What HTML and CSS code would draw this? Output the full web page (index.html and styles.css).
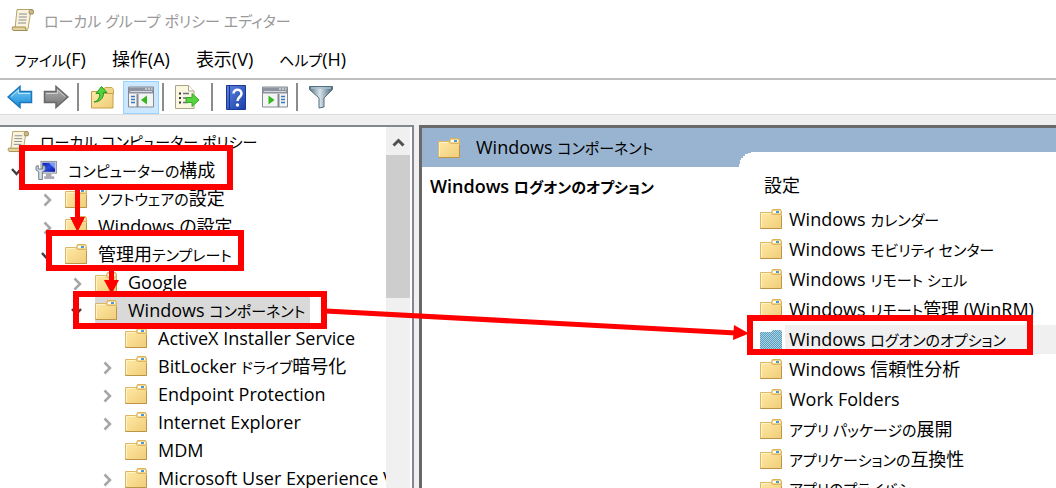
FILE: index.html
```html
<!DOCTYPE html>
<html lang="ja">
<head>
    <meta charset="UTF-8">
    <meta name="viewport" content="width=device-width, initial-scale=1.0">
    <title>ローカル グループ ポリシー エディター</title>
    <link rel="stylesheet" href="styles.css">
</head>
<body>
    <svg class="defs" aria-hidden="true">
        <defs>
            <linearGradient id="gFolder" x1="0" y1="0" x2="1" y2="1">
                <stop offset="0" stop-color="#ffe9a6"/>
                <stop offset="1" stop-color="#f0cd78"/>
            </linearGradient>
            <linearGradient id="gBlue" x1="0" y1="0" x2="0" y2="1">
                <stop offset="0" stop-color="#7fd0f7"/>
                <stop offset="1" stop-color="#1488d8"/>
            </linearGradient>
            <linearGradient id="gGray" x1="0" y1="0" x2="0" y2="1">
                <stop offset="0" stop-color="#b4b4b4"/>
                <stop offset="1" stop-color="#727272"/>
            </linearGradient>
            <linearGradient id="gHelp" x1="0" y1="0" x2="1" y2="1">
                <stop offset="0" stop-color="#5e86e0"/>
                <stop offset="1" stop-color="#1a3ea8"/>
            </linearGradient>
            <linearGradient id="gFunnel" x1="0" y1="0" x2="1" y2="0">
                <stop offset="0" stop-color="#5c7482"/>
                <stop offset="0.45" stop-color="#d5e3ec"/>
                <stop offset="1" stop-color="#4b6373"/>
            </linearGradient>
            <linearGradient id="gScreen" x1="0" y1="0" x2="1" y2="1">
                <stop offset="0" stop-color="#0a1fb0"/>
                <stop offset="0.5" stop-color="#2a4be0"/>
                <stop offset="1" stop-color="#0614a0"/>
            </linearGradient>
            <pattern id="pCheck" width="2" height="2" patternUnits="userSpaceOnUse">
                <rect width="2" height="2" fill="#b9cfc4"/>
                <rect width="1" height="1" fill="#4ba0de"/>
                <rect x="1" y="1" width="1" height="1" fill="#4ba0de"/>
            </pattern>
        </defs>
        <symbol id="folder" viewBox="0 0 22 20">
            <path d="M11 4.500L12.500.5h8l1 2V8H11z" fill="#f3d588" stroke="#d9b25c"/>
            <rect x="13" y="2" width="7" height="2" fill="#fff"/>
            <rect x="16" y="2" width="3" height="2" fill="#4a9ad8"/>
            <path d="M.5 3.500h10l2 2h9v14H.5z" fill="url(#gFolder)" stroke="#dcb866"/>
            <path d="M.5 19.500h21V7" fill="none" stroke="#bd9548"/>
            <path d="M1.500 18V4.500h8.500" fill="none" stroke="#fff3c8"/>
        </symbol>
        <symbol id="folderSel" viewBox="0 0 22 20">
            <path d="M0 3h11l2-2h8l1 2v17H0z" fill="url(#pCheck)"/>
        </symbol>
        <symbol id="scroll" viewBox="0 0 23 24">
            <path d="M6 1.500h14.500c1.500 0 2 1.500 1.500 3l-2.500.5L17 21H4z" fill="#fbf4dc" stroke="#b5a36e"/>
            <path d="M19.500 1.500c-2 1-1.500 3-1 4.500h3.500c1-2 .5-4-1-4.500z" fill="#cdb98a" stroke="#9b895c"/>
            <path d="M1.500 19h13c-.5 2 .5 3.500 2 3.500H3c-2 0-2-2-1.500-3.500z" fill="#e6d39c" stroke="#a18d55"/>
            <path d="M8 6h8M7.800 9h8M7.500 12h8M7 15h8" stroke="#8b8b96" fill="none"/>
        </symbol>
        <symbol id="computer" viewBox="0 0 24 22">
            <rect x="6.500" y="1.500" width="17" height="13" fill="#d8dade" stroke="#8a8d94"/>
            <rect x="8" y="3" width="14" height="10" fill="url(#gScreen)"/>
            <path d="M15 3h7v7z" fill="#7f9cf5"/>
            <path d="M12 15h6v3h3v3H10v-3h2z" fill="#a9adb3"/>
            <path d="M1 7v4l3 2v8.500h4V13l3-2V7L8.500 6v4h-5V6z" fill="#d6dfe6" stroke="#66737e"/>
        </symbol>
        <symbol id="open" viewBox="0 0 11 8"><path d="M1 1l4.500 5L10 1" fill="none" stroke="#404040" stroke-width="2.500"/></symbol>
        <symbol id="closed" viewBox="0 0 9 14"><path d="M1.500 1.500L7 7l-5.500 5.500" fill="none" stroke="#a6a6a6" stroke-width="2.500"/></symbol>
    </svg>

    <header class="title-bar">
        <svg class="title-icon"><use href="#scroll"/></svg>
        <h1><span class="kana">ローカル グループ ポリシー エディター</span></h1>
    </header>

    <nav class="menu-bar">
        <button><span class="kana">ファイル</span>(F)</button>
        <button>操作(A)</button>
        <button>表示(V)</button>
        <button><span class="kana">ヘルプ</span>(H)</button>
    </nav>

    <div class="toolbar">
        <button class="tool" aria-label="戻る">
            <svg width="26" height="24" viewBox="0 0 26 24"><path d="M1 12L13 1.500v5h11.500v11H13v5z" fill="url(#gBlue)" stroke="#1b77bd" stroke-width="1.500"/><path d="M4 11.500l7.500-6.500v3.500H23" fill="none" stroke="#b9e6fb"/></svg>
        </button>
        <button class="tool" aria-label="進む">
            <svg width="26" height="24" viewBox="0 0 26 24"><path d="M25 12L13 1.500v5H1.500v11H13v5z" fill="url(#gGray)" stroke="#686868" stroke-width="1.500"/><path d="M3 8.500h11.500V5l7.500 6.500" fill="none" stroke="#cfcfcf"/></svg>
        </button>
        <span class="sep"></span>
        <button class="tool wide" aria-label="1 つ上のレベルへ">
            <svg width="24" height="24" viewBox="0 0 24 24"><path d="M13 5.500L15 2.500h7l1.500 2V9H13z" fill="#f3d588" stroke="#cfa750"/><path d="M1.500 6.500H12l2 2h9v14.500H1.500z" fill="url(#gFolder)" stroke="#c79f4b"/><path d="M4 17c4-1 6-4 5.500-8.500H6L11.500 1.500 17 7.500h-3.500C14 13 10 17 4 17z" fill="#4fd23c" stroke="#279a22"/></svg>
        </button>
        <button class="tool active" aria-label="コンソール ツリーの表示/非表示">
            <svg width="26" height="22" viewBox="0 0 26 22"><path d="M.5 1h25v20H.5z" fill="#f4f4f4" stroke="#848a93"/><path d="M1 1.500h24v6H1z" fill="#8d949f"/><path d="M2 5.500h22" stroke="#d5d9df"/><path d="M17 3h2M20 3h2M23 3h1.500" stroke="#fff"/><path d="M3 10.500h4M3 13.500h4M3 16.500h4" stroke="#3a78c2" stroke-width="1.500"/><path d="M9.500 8v13" stroke="#848a93" stroke-width="2"/><path d="M19 9.500v9L13 14z" fill="#35b81e"/></svg>
        </button>
        <span class="sep"></span>
        <button class="tool wide" aria-label="一覧のエクスポート">
            <svg width="26" height="26" viewBox="0 0 26 26"><path d="M1.500 1.500h13L20 7v17.500H1.500z" fill="#fbf6e0" stroke="#a9a488"/><path d="M14.500 1.500V7H20" fill="#fff" stroke="#a9a488"/><path d="M5 9.500h2M5 14h2M5 18.500h2" stroke="#333" stroke-width="2"/><path d="M9 9.500h6M9 14h4M9 18.500h5" stroke="#6d6d88" stroke-width="1.500"/><path d="M12 13.500h6V9.500l7 6.500-7 6.500V18.500h-6z" fill="#57d33f" stroke="#38a82a"/></svg>
        </button>
        <span class="sep"></span>
        <button class="tool wide" aria-label="ヘルプ">
            <svg width="20" height="25" viewBox="0 0 20 25"><path d="M.5.500h19v24H.5z" fill="url(#gHelp)" stroke="#1b3a94"/><path d="M3.500 1v23" stroke="#16348f"/><path d="M7.500 8.500c0-5 8-5 8 0 0 3.500-4 3.500-4 7.500" fill="none" stroke="#fff" stroke-width="2.500"/><circle cx="11.500" cy="20" r="1.700" fill="#fff"/></svg>
        </button>
        <button class="tool" aria-label="操作ウィンドウの表示/非表示">
            <svg width="26" height="22" viewBox="0 0 26 22"><path d="M.5 1h25v20H.5z" fill="#f4f4f4" stroke="#848a93"/><path d="M1 1.500h24v6H1z" fill="#8d949f"/><path d="M2 5.500h22" stroke="#d5d9df"/><path d="M17 3h2M20 3h2M23 3h1.500" stroke="#fff"/><path d="M19 10.500h4M19 13.500h4M19 16.500h4" stroke="#3a78c2" stroke-width="1.500"/><path d="M16.500 8v13" stroke="#848a93" stroke-width="2"/><path d="M6.500 9.500v9l6-4.500z" fill="#35b81e"/></svg>
        </button>
        <span class="sep"></span>
        <button class="tool wide" aria-label="フィルター">
            <svg width="26" height="24" viewBox="0 0 26 24"><path d="M1.500 1.500h23v3L16 13v9l-5 1V13L1.500 4.500z" fill="url(#gFunnel)" stroke="#566f7e"/><path d="M3 3h20" stroke="#a9c2d0" stroke-width="1.500"/></svg>
        </button>
    </div>

    <main class="panes">
        <section class="tree-pane">
            <ul class="tree">
                <li>
                    <div class="row root"><svg class="icon"><use href="#scroll"/></svg><span class="label kana">ローカル コンピューター ポリシー</span></div>
                    <ul class="first">
                        <li>
                            <div class="row"><svg class="arrow open"><use href="#open"/></svg><svg class="icon"><use href="#computer"/></svg><span class="label"><span class="kana">コンピューターの</span>構成</span></div>
                            <ul>
                                <li><div class="row"><svg class="arrow"><use href="#closed"/></svg><svg class="icon"><use href="#folder"/></svg><span class="label"><span class="kana">ソフトウェアの</span>設定</span></div></li>
                                <li><div class="row"><svg class="arrow"><use href="#closed"/></svg><svg class="icon"><use href="#folder"/></svg><span class="label">Windows の設定</span></div></li>
                                <li>
                                    <div class="row"><svg class="arrow open"><use href="#open"/></svg><svg class="icon"><use href="#folder"/></svg><span class="label">管理用<span class="kana">テンプレート</span></span></div>
                                    <ul>
                                        <li><div class="row"><svg class="arrow"><use href="#closed"/></svg><svg class="icon"><use href="#folder"/></svg><span class="label">Google</span></div></li>
                                        <li>
                                            <div class="row"><svg class="arrow open"><use href="#open"/></svg><div class="selected"><svg class="icon"><use href="#folder"/></svg><span class="label">Windows <span class="kana">コンポーネント</span></span></div></div>
                                            <ul>
                                                <li><div class="row"><span class="arrow"></span><svg class="icon"><use href="#folder"/></svg><span class="label">ActiveX Installer Service</span></div></li>
                                                <li><div class="row"><svg class="arrow"><use href="#closed"/></svg><svg class="icon"><use href="#folder"/></svg><span class="label">BitLocker <span class="kana">ドライブ</span>暗号化</span></div></li>
                                                <li><div class="row"><svg class="arrow"><use href="#closed"/></svg><svg class="icon"><use href="#folder"/></svg><span class="label">Endpoint Protection</span></div></li>
                                                <li><div class="row"><svg class="arrow"><use href="#closed"/></svg><svg class="icon"><use href="#folder"/></svg><span class="label">Internet Explorer</span></div></li>
                                                <li><div class="row"><span class="arrow"></span><svg class="icon"><use href="#folder"/></svg><span class="label">MDM</span></div></li>
                                                <li><div class="row"><svg class="arrow"><use href="#closed"/></svg><svg class="icon"><use href="#folder"/></svg><span class="label">Microsoft User Experience V</span></div></li>
                                            </ul>
                                        </li>
                                    </ul>
                                </li>
                            </ul>
                        </li>
                    </ul>
                </li>
            </ul>
            <div class="scrollbar">
                <button class="scroll-up" aria-label="上へスクロール"><svg width="13" height="9" viewBox="0 0 13 9"><path d="M1.500 7.500l5-5 5 5" fill="none" stroke="#505050" stroke-width="3"/></svg></button>
                <div class="thumb"></div>
            </div>
        </section>

        <section class="detail-pane">
            <div class="detail-head">
                <svg class="icon"><use href="#folder"/></svg>
                <span>Windows <span class="kana">コンポーネント</span></span>
            </div>
            <div class="detail-body">
                <h2>Windows <span class="kana">ログオンのオプション</span></h2>
                <div class="settings">
                    <svg class="corner" viewBox="0 0 12 16"><path d="M0 16v-4h1V8h1V6h2V4h2V2h3V1h3v15z" fill="#fff"/></svg>
                    <div class="sheet">
                        <div class="col-head">設定</div>
                        <ul class="list">
                            <li><svg class="icon"><use href="#folder"/></svg><span class="name">Windows <span class="kana">カレンダー</span></span></li>
                            <li><svg class="icon"><use href="#folder"/></svg><span class="name">Windows <span class="kana">モビリティ センター</span></span></li>
                            <li><svg class="icon"><use href="#folder"/></svg><span class="name">Windows <span class="kana">リモート シェル</span></span></li>
                            <li><svg class="icon"><use href="#folder"/></svg><span class="name">Windows <span class="kana">リモート</span>管理 (WinRM)</span></li>
                            <li class="current"><svg class="icon"><use href="#folderSel"/></svg><span class="name">Windows <span class="kana">ログオンのオプション</span></span></li>
                            <li><svg class="icon"><use href="#folder"/></svg><span class="name">Windows 信頼性分析</span></li>
                            <li><svg class="icon"><use href="#folder"/></svg><span class="name">Work Folders</span></li>
                            <li><svg class="icon"><use href="#folder"/></svg><span class="name"><span class="kana">アプリ パッケージの</span>展開</span></li>
                            <li><svg class="icon"><use href="#folder"/></svg><span class="name"><span class="kana">アプリケーションの</span>互換性</span></li>
                            <li><svg class="icon"><use href="#folder"/></svg><span class="name kana">アプリのプライバシー</span></li>
                        </ul>
                    </div>
                </div>
            </div>
        </section>
    </main>

    <!-- red guide boxes and arrows over the window -->
    <svg class="guide" width="1056" height="488" viewBox="0 0 1056 488" aria-hidden="true">
        <g fill="none" stroke="#f00" stroke-width="6">
            <rect x="22" y="148" width="208" height="39"/>
            <rect x="49" y="233" width="192" height="35"/>
            <rect x="76" y="294" width="248" height="32"/>
            <rect x="750" y="318" width="280" height="34"/>
        </g>
        <g stroke="#f00" stroke-width="5">
            <path d="M77.500 188v32M111.500 270v14M326 311l410 22"/>
        </g>
        <path d="M70 217h15l-7.500 15zM104 280h15l-7.500 14zM734 325l15 8.500-16 6.500z" fill="#f00"/>
    </svg>
</body>
</html>
```
FILE: styles.css
```css
* {
    box-sizing: border-box;
}

body {
    margin: 0;
    height: 100vh;
    display: flex;
    flex-direction: column;
    overflow: hidden;
    position: relative;
    background-color: #f0f0f0;
    color: #000;
    font-family: "Open Sans", "Noto Sans CJK JP", sans-serif;
    font-size: 18px;
    line-height: 28px;
    font-feature-settings: "palt";
    white-space: nowrap;
}

ul {
    list-style: none;
    margin: 0;
    padding: 0;
}

button {
    font: inherit;
    font-feature-settings: inherit;
    color: inherit;
    background: none;
    border: none;
    padding: 0;
}

svg {
    display: block;
    flex-shrink: 0;
}

/* katakana runs are set smaller than kanji and latin */
.kana {
    font-size: 15px;
}

.defs {
    position: absolute;
    width: 0;
    height: 0;
}

.guide {
    position: absolute;
    top: 0;
    left: 0;
    pointer-events: none;
}

.title-bar {
    display: flex;
    align-items: center;
    gap: 10px;
    height: 40px;
    padding-left: 11px;
    background-color: #fff;
}

.title-icon {
    width: 23px;
    height: 24px;
}

.title-bar h1 {
    margin: 0;
    font-size: 18px;
    font-weight: normal;
    color: #999;
}

.menu-bar {
    display: flex;
    align-items: center;
    gap: 26px;
    height: 40px;
    padding-left: 14px;
    background-color: #fff;
    border-bottom: 2px solid #bfbfbf;
}

.toolbar {
    display: flex;
    align-items: center;
    height: 35px;
    padding-left: 2px;
    background-color: #fff;
    border-bottom: 1px solid #dcdcdc;
}

.tool {
    display: flex;
    align-items: center;
    justify-content: center;
    width: 36px;
    height: 33px;
}

.wide {
    width: 42px;
}

.active {
    background-color: #cce8ff;
    border: 1px solid #99d1ff;
}

.sep {
    width: 2px;
    height: 28px;
    margin: 0 2px 0 3px;
    background-color: #8c8c8c;
}

.panes {
    flex: 1;
    min-height: 0;
    display: flex;
    gap: 5px;
    padding-top: 10px;
}

.tree-pane {
    flex: 0 0 414px;
    min-width: 0;
    display: flex;
    background-color: #fff;
    border-top: 2px solid #828790;
    border-right: 2px solid #828790;
}

.tree {
    flex: 1;
    min-width: 0;
    overflow: hidden;
}

.tree ul ul {
    padding-left: 30px;
}

.tree .first {
    padding-left: 5px;
}

.row {
    display: flex;
    align-items: center;
    height: 28px;
}

.root {
    height: 29px;
    padding-left: 7px;
}

.icon {
    width: 22px;
    height: 20px;
    margin-right: 11px;
}

.root .icon {
    height: 23px;
}

.arrow {
    flex-shrink: 0;
    width: 9px;
    height: 14px;
    margin: 4px 13px 0 8px;
}

.arrow.open {
    width: 11px;
    height: 8px;
    margin: 4px 13px 0 6px;
}

.selected {
    display: flex;
    align-items: center;
    background-color: #d9d9d9;
    padding-right: 5px;
}

.scrollbar {
    flex-shrink: 0;
    width: 24px;
    margin-right: 2px;
    padding-top: 2px;
    background-color: #f0f0f0;
}

.scroll-up {
    display: flex;
    align-items: center;
    justify-content: center;
    width: 100%;
    height: 26px;
}

.thumb {
    height: 143px;
    background-color: #cdcdcd;
}

.detail-pane {
    flex: 1;
    min-width: 0;
    display: flex;
    flex-direction: column;
    background-color: #fff;
    border-top: 3px solid #696969;
    border-left: 3px solid #696969;
}

.detail-head {
    display: flex;
    align-items: center;
    flex-shrink: 0;
    height: 39px;
    padding-left: 16px;
    background-color: #99b4d1;
}

.detail-head .icon {
    margin-right: 16px;
}

.detail-body {
    flex: 1;
    min-height: 0;
    display: flex;
}

.detail-body h2 {
    flex: 0 0 50%;
    margin: 5px 0 0;
    padding-left: 8px;
    font-size: 18px;
    line-height: 28px;
    font-weight: 600;
}

/* white sheet rises into the blue header like a tab */
.settings {
    flex: 1;
    display: flex;
    margin-top: -15px;
}

.corner {
    width: 12px;
    height: 16px;
}

.sheet {
    flex: 1;
    background-color: #fff;
    padding-left: 9px;
}

.col-head {
    height: 52px;
    padding: 19px 0 0 4px;
}

.list li {
    display: flex;
    align-items: center;
    height: 30px;
}

.list .icon {
    margin-right: 3px;
}

.name {
    flex: 1;
    padding-left: 4px;
}

.current .name {
    background-color: #f0f0f0;
}
```
